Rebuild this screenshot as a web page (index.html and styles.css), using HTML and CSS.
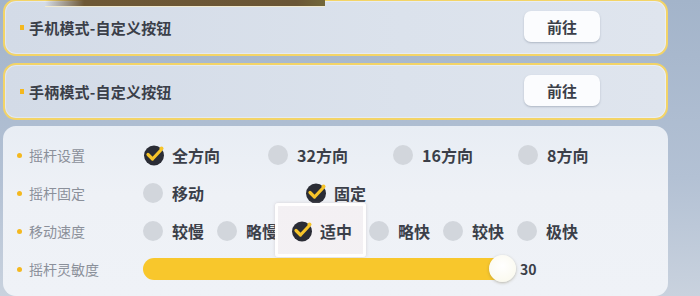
FILE: index.html
```html
<!DOCTYPE html>
<html lang="zh-CN">
<head>
    <meta charset="UTF-8">
    <meta name="viewport" content="width=device-width, initial-scale=1.0">
    <title>操作设置</title>
    <link rel="stylesheet" href="styles.css">
</head>
<body>
    <div class="page">
        <div class="card card-first">
            <div class="card-thumb"></div>
            <span class="card-title">手机模式-自定义按钮</span>
            <button class="go-btn">前往</button>
        </div>
        <div class="card">
            <span class="card-title">手柄模式-自定义按钮</span>
            <button class="go-btn">前往</button>
        </div>

        <div class="panel">
            <div class="row">
                <span class="row-label">摇杆设置</span>
                <div class="options options-wide">
                    <div class="option on"><span class="mark"></span>全方向</div>
                    <div class="option"><span class="mark"></span>32方向</div>
                    <div class="option"><span class="mark"></span>16方向</div>
                    <div class="option"><span class="mark"></span>8方向</div>
                </div>
            </div>
            <div class="row">
                <span class="row-label">摇杆固定</span>
                <div class="options options-pair">
                    <div class="option"><span class="mark"></span>移动</div>
                    <div class="option on"><span class="mark"></span>固定</div>
                </div>
            </div>
            <div class="row">
                <span class="row-label">移动速度</span>
                <div class="options options-tight">
                    <div class="option"><span class="mark"></span>较慢</div>
                    <div class="option"><span class="mark"></span>略慢</div>
                    <div class="option on focus"><span class="mark"></span>适中</div>
                    <div class="option"><span class="mark"></span>略快</div>
                    <div class="option"><span class="mark"></span>较快</div>
                    <div class="option"><span class="mark"></span>极快</div>
                </div>
            </div>
            <div class="row">
                <span class="row-label">摇杆灵敏度</span>
                <div class="slider">
                    <div class="track">
                        <div class="knob"></div>
                    </div>
                    <span class="slider-value">30</span>
                </div>
            </div>
        </div>
    </div>

    <template id="check">
        <svg viewBox="0 0 22 22" width="22" height="22">
            <circle cx="11" cy="11.5" r="10" fill="#2a2c35"/>
            <path d="M5 10.5 L9.5 15 L17.5 6.5" fill="none" stroke="#f6c42a" stroke-width="3.2" stroke-linecap="round" stroke-linejoin="round"/>
            <circle cx="18.5" cy="4.5" r="2" fill="#f6c42a"/>
        </svg>
    </template>
    <script>
        // put the check icon into every selected option
        const tpl = document.getElementById('check');
        document.querySelectorAll('.option.on .mark').forEach(function (mark) {
            mark.appendChild(tpl.content.cloneNode(true));
        });
    </script>
</body>
</html>
```

FILE: styles.css
```css
html, body {
margin: 0;
padding: 0;
}

body {
width: 700px;
height: 296px;
overflow: hidden;
background: linear-gradient(180deg, #a3b4ca 0%, #b3c1d4 60%, #c9d2de 100%);
font-family: "Noto Sans CJK SC", "Noto Sans", sans-serif;
}

.page {
width: 665px;
padding-left: 3px;
}

.card {
position: relative;
box-sizing: border-box;
height: 57px;
margin-top: 7px;
padding: 0 66px 0 15px;
display: flex;
align-items: center;
justify-content: space-between;
border: 2px solid #f3d467;
border-radius: 13px;
background: linear-gradient(90deg, #d3dbe7 0%, #dbe2ec 60%, #dfe5ee 100%);
box-shadow: inset 0 0 0 1px rgba(255, 255, 255, 0.35);
}

.card-first {
margin-top: -1px;
}

/* bottom edge of the picture sitting above */
.card-thumb {
position: absolute;
top: -2px;
left: 40px;
width: 280px;
height: 7px;
background: linear-gradient(90deg, rgba(110, 88, 52, 0) 0%, #6e5835 14%, #6a5636 90%, #73683a 100%);
border-bottom: 1px solid #f1ead0;
}

.card-title {
display: flex;
align-items: center;
font-size: 15px;
font-weight: bold;
color: #3b3f49;
letter-spacing: 0.2px;
}

.card-title::before {
content: "";
width: 4px;
height: 5px;
margin-right: 5px;
background: #f4b81f;
}

.go-btn {
width: 76px;
height: 31px;
margin-top: -3px;
border: none;
border-radius: 7px;
background: #fbfcfe;
box-shadow: 0 1px 2px rgba(90, 100, 120, 0.35);
font-family: inherit;
font-size: 15px;
font-weight: bold;
color: #3b3f49;
}

.panel {
box-sizing: border-box;
height: 170px;
margin-top: 6px;
padding: 10px 0 0 14px;
border-radius: 13px;
background: linear-gradient(180deg, #e8edf4 0%, #eef1f6 40%, #eff2f7 100%);
}

.row {
height: 38px;
display: flex;
align-items: center;
}

.row-label {
width: 126px;
display: flex;
align-items: center;
font-size: 14px;
color: #8b909a;
}

.row-label::before {
content: "";
width: 5px;
height: 5px;
margin-right: 7px;
border-radius: 50%;
background: #f4b81f;
}

.options {
display: flex;
}

.option {
position: relative;
z-index: 0;
display: flex;
align-items: center;
font-size: 16px;
font-weight: bold;
color: #3b3f49;
}

.options-wide .option {
width: 125px;
}

.options-pair .option {
width: 162px;
}

.options-tight .option {
width: 74px;
}

.options-tight .option.on {
width: 78px;
}

.mark {
width: 20px;
height: 20px;
margin-right: 9px;
border-radius: 50%;
background: #d2d6dc;
}

.option.on .mark {
width: 22px;
height: 22px;
margin-right: 7px;
background: none;
}

.mark svg {
display: block;
}

/* tutorial highlight frame, kept under the option's text */
.option.focus::after {
content: "";
position: absolute;
z-index: -1;
left: -16px;
top: -16px;
width: 85px;
height: 48px;
border: 3px solid rgba(255, 255, 255, 0.95);
border-radius: 3px;
background: rgba(247, 240, 242, 0.6);
box-shadow: 0 0 3px rgba(180, 170, 175, 0.5);
}

.slider {
display: flex;
align-items: center;
}

.track {
position: relative;
width: 367px;
height: 22px;
border-radius: 11px;
background: #f8c72c;
}

.knob {
position: absolute;
left: 346px;
top: -3px;
width: 27px;
height: 27px;
border-radius: 50%;
background: radial-gradient(circle at 50% 40%, #ffffff 0%, #fbfaf0 70%, #efeee2 100%);
box-shadow: 0 1px 3px rgba(120, 110, 80, 0.45);
}

.slider-value {
margin-left: 10px;
font-size: 14px;
font-weight: bold;
color: #3b3f49;
}
```
